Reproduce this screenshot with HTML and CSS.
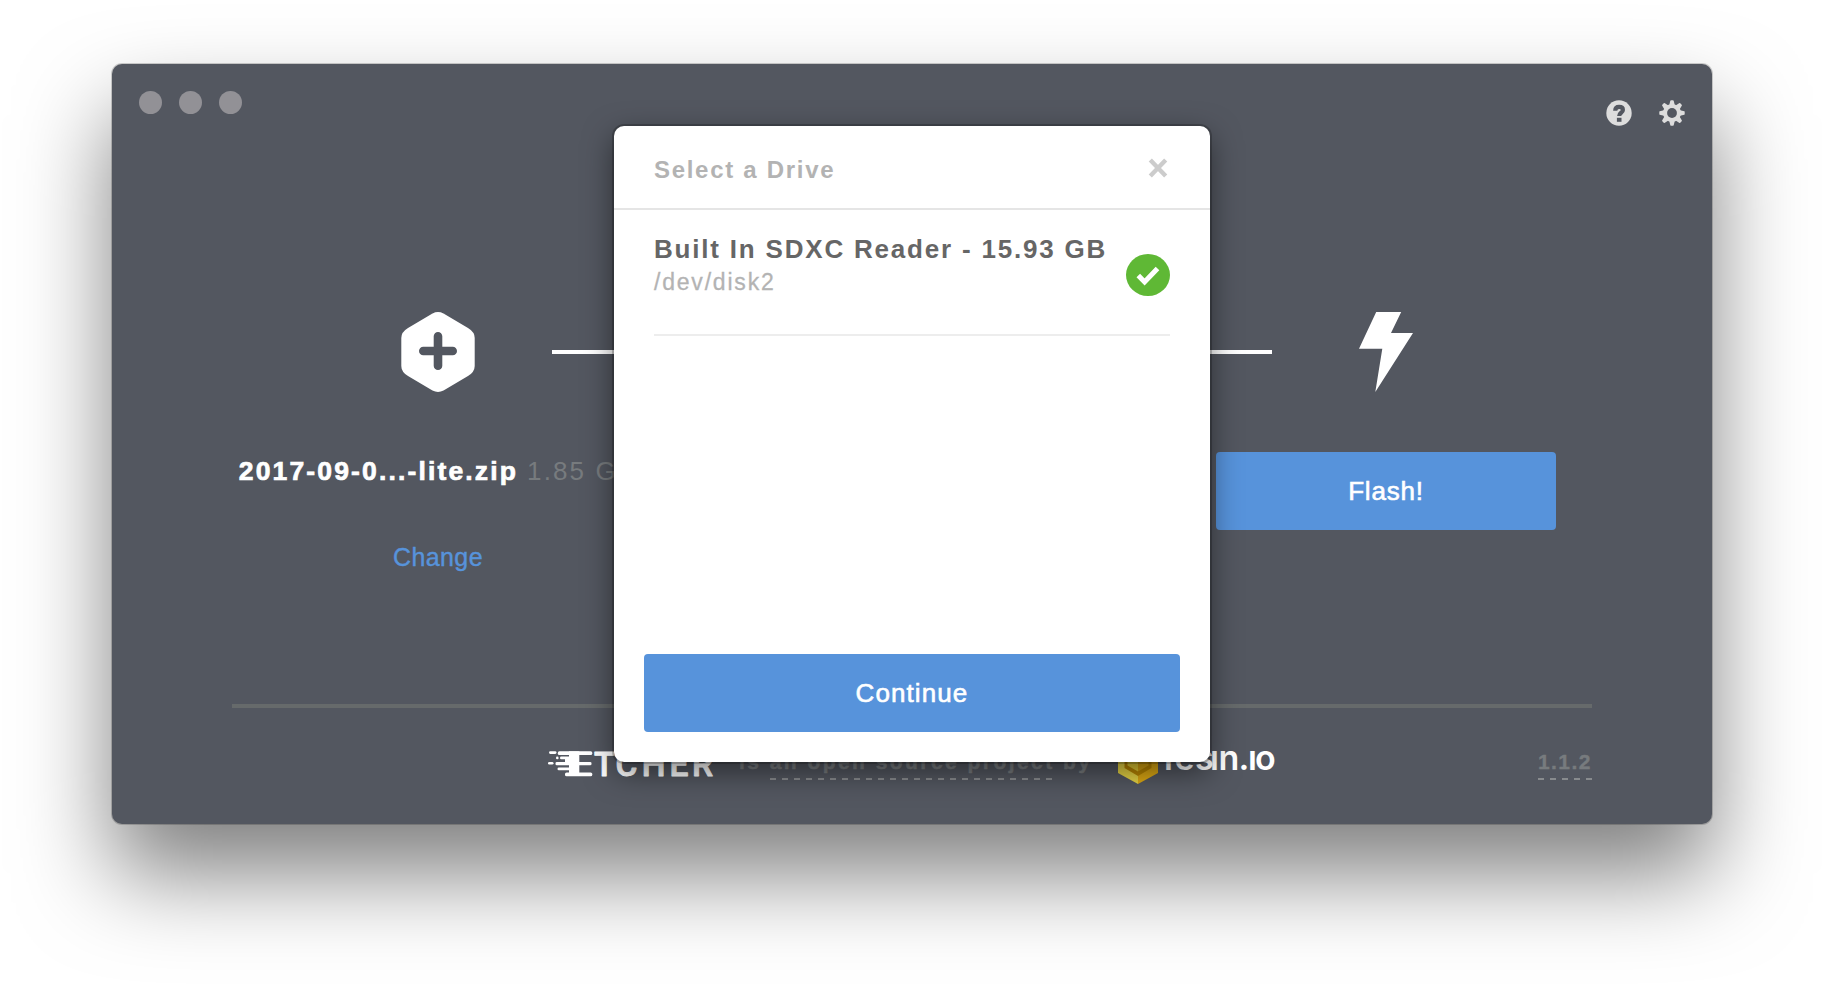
FILE: index.html
```html
<!DOCTYPE html>
<html lang="en">
<head>
<meta charset="utf-8">
<title>Etcher</title>
<link rel="stylesheet" href="styles.css">
</head>
<body>
<main class="window">
  <header class="titlebar">
    <div class="lights"><span class="light"></span><span class="light"></span><span class="light"></span></div>
    <nav class="tools">
      <svg class="tool" viewBox="0 0 26 26"><circle cx="13" cy="13" r="12.700" fill="#ddd"/><path d="M9.200 10.800C9.300 8 10.800 6.900 13.100 6.900c2.300 0 3.800 1.100 3.800 3 0 3-3.700 2.700-3.700 6" fill="none" stroke="#535760" stroke-width="4.200"/><rect x="10.900" y="17.800" width="4.600" height="4" fill="#535760"/></svg>
      <svg class="tool" viewBox="0 0 26 26"><g fill="#ddd"><path id="t" d="M10 6 11.300.7Q11.400.3 12 .3h2q.6 0 .7.400L16 6v14l-1.300 5.300q-.1.400-.7.400h-2q-.6 0-.7-.4L10 20z"/><use href="#t" transform="rotate(45 13 13)"/><use href="#t" transform="rotate(90 13 13)"/><use href="#t" transform="rotate(135 13 13)"/><circle cx="13" cy="13" r="9"/></g><circle cx="13" cy="13" r="4.900" fill="#535760"/></svg>
    </nav>
  </header>

  <section class="icons">
    <svg class="step-icon" viewBox="0 0 80 80"><path d="M34.500 1.500Q40-1.300 45.500 1.500L70 16Q76.700 20 76.700 26V54Q76.700 60 70 64L45.500 78.500Q40 81.300 34.500 78.500L10 64Q3.300 60 3.300 54V26Q3.300 20 10 16Z" fill="#fff"/><path d="M40 24.300v29.400M25.300 39h29.400" stroke="#535760" stroke-width="8.600" stroke-linecap="round"/></svg>
    <span class="connector"></span>
    <svg class="step-icon" viewBox="0 0 80 80"><path d="M30.200 0h25l-10.200 21h22L29.300 80l7-43.300H13z" fill="#fff"/></svg>
  </section>

  <section class="steps">
    <div class="step">
      <div class="image-name"><b>2017-09-0...-lite.zip</b><span class="image-size">1.85 GB</span></div>
      <a class="change">Change</a>
    </div>
    <div class="step"></div>
    <div class="step"><button class="button flash">Flash!</button></div>
  </section>

  <footer class="footer">
    <span></span>
    <div class="credits">
      <svg class="etcher" viewBox="0 0 166 28" fill="#fff">
        <g><rect x="1" y="1.300" width="7.500" height="2.600" rx="1.300"/><rect x="9.800" y="1.300" width="34.500" height="3.800" rx="1.600"/><rect x="21" y="1.300" width="10.300" height="24.700"/><rect x="8" y="6.600" width="2.600" height="2.600" rx="1.300"/><rect x="12" y="6.600" width="18" height="2.600" rx="1.300"/><rect x="0" y="12" width="5.500" height="2.600" rx="1.300"/><rect x="7.500" y="12" width="36" height="3.200" rx="1.300"/><rect x="17" y="9" width="8" height="3.500"/><rect x="9.500" y="17.600" width="18" height="2.600" rx="1.300"/><rect x="17" y="22.500" width="27.300" height="3.800" rx="1.600"/></g>
        <text class="etcher-text" y="25.500" x="46 67.500 93.700 121.500 144">TCHER</text>
      </svg>
      <div class="blurb">is <span class="dashed project">an open source project</span> by</div>
      <svg class="resin" viewBox="0 0 160 48">
        <path d="M20 1 40 12 20 24 0 12z" fill="#f4e660"/><path d="M0 12 20 24v23L0 36z" fill="#e6d344"/><path d="M40 12 20 24v23l20-11z" fill="#dca813"/>
        <path d="M6.500 16 20 8l13.500 8v15L20 39 6.500 31z" fill="#b78500"/><path d="M9.500 17 20 11v23.500l-10.500-6z" fill="#dfc732"/><path d="M30.500 17 20 11v23.500l10.500-6z" fill="#d2a010"/>
        <text class="resin-text" y="33" x="46 56.500 77 92 100.500 120.500 130 137">resın.ıo</text>
      </svg>
    </div>
    <span class="dashed version">1.1.2</span>
  </footer>

  <div class="modal" role="dialog">
    <div class="modal-header">
      <span class="modal-title">Select a Drive</span>
      <svg class="close" viewBox="0 0 20 20"><path d="M2.300 2l15.400 16M17.700 2l-15.400 16" stroke="#ccc" stroke-width="4.400"/></svg>
    </div>
    <div class="modal-body">
      <div class="drive">
        <div class="drive-text"><div class="drive-name">Built In SDXC Reader - 15.93 GB</div><div class="drive-path">/dev/disk2</div></div>
        <svg class="check" viewBox="0 0 44 42"><ellipse cx="22" cy="21" rx="22" ry="21" fill="#5fb835"/><path d="M12.300 21.500l6.300 6.500L31.500 14.500" fill="none" stroke="#fff" stroke-width="5"/></svg>
      </div>
    </div>
    <div class="modal-footer"><button class="button continue">Continue</button></div>
  </div>
</main>
</body>
</html>
```
FILE: styles.css
```css
* { box-sizing: border-box; }
body {
  margin: 0;
  height: 984px;
  padding: 64px 112px;
  background: #fff;
  font-family: "Liberation Sans", Arial, sans-serif;
  overflow: hidden;
}
.window {
  position: relative;
  display: flex;
  flex-direction: column;
  height: 760px;
  border-radius: 10px;
  background: #535760;
  box-shadow: 0 0 0 1px rgba(0, 0, 0, .18), 0 50px 92px rgba(0, 0, 0, .5);
}
.titlebar {
  display: flex;
  justify-content: space-between;
  height: 248px;
  padding: 26.5px 27px 0 26.5px;
}
.lights { display: flex; gap: 17px; }
.light {
  width: 23px;
  height: 23px;
  border-radius: 50%;
  background: #929196;
}
.tools { display: flex; gap: 27.5px; padding-top: 9.5px; }
.tool { width: 26px; height: 26px; }
.icons {
  display: flex;
  justify-content: center;
  align-items: center;
  gap: 74px;
  height: 80px;
}
.step-icon { width: 80px; height: 80px; }
.connector {
  width: 720px;
  height: 4px;
  background: #fff;
}
.steps {
  display: grid;
  grid-template-columns: repeat(3, 474px);
  justify-content: center;
  height: 248px;
  padding-top: 60px;
}
.step {
  display: flex;
  flex-direction: column;
  align-items: center;
  white-space: nowrap;
}
.image-name {
  padding-top: 4px;
  font-size: 26px;
  line-height: 30px;
  letter-spacing: 2.1px;
  color: #fff;
}
.image-name b {
  font-size: 26.5px;
  letter-spacing: 2.15px;
  -webkit-text-stroke: .7px #fff;
}
.image-size { margin-left: 9px; color: #777b7e; }
.change {
  margin-top: 56px;
  font-size: 25px;
  line-height: 30px;
  letter-spacing: .4px;
  color: #5793db;
  -webkit-text-stroke: .4px #5793db;
}
.button {
  height: 78px;
  padding: 0;
  border: 0;
  border-radius: 4px;
  background: #5793db;
  color: #fff;
  font: 26px "Liberation Sans", Arial, sans-serif;
  letter-spacing: 1.1px;
  -webkit-text-stroke: .6px #fff;
}
.flash { width: 340px; letter-spacing: .8px; }
.footer {
  display: grid;
  grid-template-columns: 1fr auto 1fr;
  align-items: start;
  margin: 64px 120px 0;
  border-top: 4px solid #666a6b;
  font-size: 21px;
  font-weight: bold;
  line-height: 28px;
  color: #777b7e;
}
.credits {
  display: flex;
  width: 728px;
}
.etcher { width: 166px; height: 28px; margin-top: 42px; flex: none; }
.etcher-text {
  font: 500 33.5px Roboto, sans-serif;
  stroke: #fff;
  stroke-width: .9px;
  stroke-linejoin: round;
}
.blurb {
  width: 378px;
  margin-top: 40px;
  padding-left: 25px;
  letter-spacing: 2.45px;
  white-space: nowrap;
  color: #777b7e;
  -webkit-text-stroke: .5px #777b7e;
}
.dashed {
  display: inline-block;
  height: 32px;
  background: repeating-linear-gradient(90deg, #888b8e 0 6px, transparent 6px 12px) left bottom / 100% 2px no-repeat;
}
.resin { width: 160px; height: 48px; margin: 29px 0 0 26px; flex: none; }
.resin-text {
  font: 600 34px Inter, sans-serif;
  fill: #fff;
}
.version {
  justify-self: end;
  margin-top: 40px;
  width: 54px;
  letter-spacing: 1.4px;
  -webkit-text-stroke: .4px #777b7e;
}
.modal {
  position: absolute;
  top: 62px;
  left: 502px;
  display: flex;
  flex-direction: column;
  width: 596px;
  height: 636px;
  border-radius: 10px;
  background: #fff;
  box-shadow: 0 0 0 2px rgba(0, 0, 0, .2), 0 10px 30px rgba(0, 0, 0, .5);
}
.modal-header {
  display: flex;
  justify-content: space-between;
  height: 84px;
  padding: 32px 42px 0 40px;
  border-bottom: 2px solid #e5e5e5;
}
.modal-title {
  font-size: 24px;
  font-weight: bold;
  line-height: 24px;
  letter-spacing: 1.7px;
  color: #b3b3b3;
}
.close { width: 20px; height: 20px; }
.modal-body { flex: 1; padding: 0 40px; }
.drive {
  display: flex;
  justify-content: space-between;
  height: 126px;
  padding-top: 23px;
  border-bottom: 2px solid #ededed;
}
.drive-text { white-space: nowrap; }
.drive-name {
  width: 460px;
  font-size: 26px;
  font-weight: bold;
  line-height: 32px;
  letter-spacing: 1.8px;
  color: #666;
}
.drive-path {
  padding-top: 1px;
  font-size: 23px;
  line-height: 32px;
  letter-spacing: 1.8px;
  color: #b3b3b3;
  -webkit-text-stroke: .3px #b3b3b3;
}
.check { width: 44px; height: 42px; margin-top: 21px; flex: none; }
.modal-footer { padding: 0 30px 30px; }
.continue { display: block; width: 100%; }
```
